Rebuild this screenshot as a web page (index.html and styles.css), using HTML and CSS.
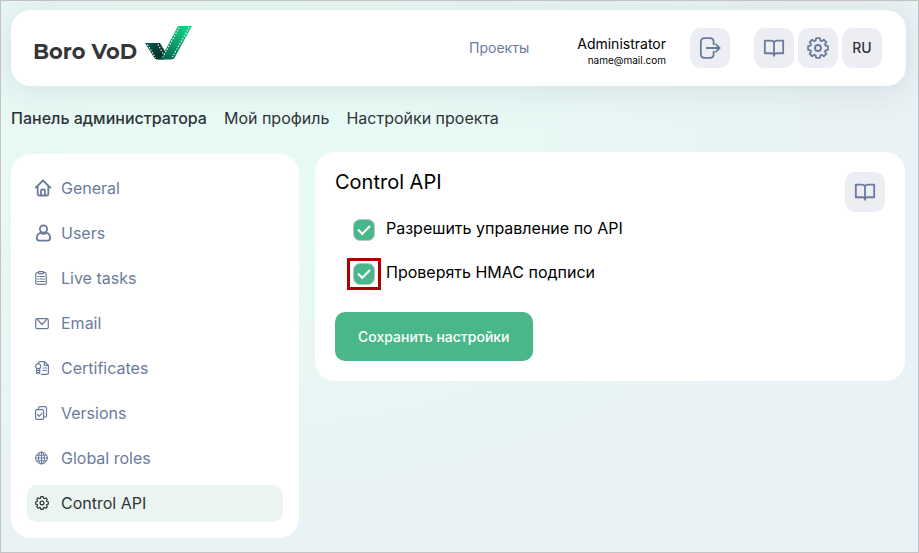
FILE: index.html
```html
<!DOCTYPE html>
<html lang="ru">
<head>
<meta charset="utf-8">
<meta name="viewport" content="width=device-width, initial-scale=1">
<title>Boro VoD</title>
<link rel="stylesheet" href="styles.css">
</head>
<body>
<svg class="sprite" aria-hidden="true">
  <symbol id="book" viewBox="0 0 24 24"><path d="M12 6C11.500 4.700 10 4 8.500 4H2v13.700h7c1.500 0 2.500.6 3 2 .5-1.400 1.500-2 3-2h7V4h-6.500C14 4 12.500 4.700 12 6zM12 6V20.500"/></symbol>
  <symbol id="gear" viewBox="0 0 24 24"><path d="M10 2.200h4l.6 2.700 1.400.6 2.400-1.500 2.700 2.700-1.500 2.400.6 1.400 2.600.5v4l-2.600.6-.6 1.300 1.500 2.400-2.700 2.700-2.400-1.500-1.400.6-.6 2.700h-4l-.6-2.700-1.400-.6L5.600 22l-2.700-2.700 1.500-2.400-.6-1.300-2.600-.6v-4l2.600-.5.6-1.400-1.500-2.400L5.600 4 8 5.500l1.400-.6z" transform="translate(0 -1)"/><circle cx="12" cy="12" r="3.300"/></symbol>
</svg>
<div class="page">
  <header class="topbar">
    <a class="brand" href="#">
      <span>Boro VoD</span>
      <svg class="brand-mark" viewBox="0 0 48 36" aria-hidden="true">
        <defs>
          <linearGradient id="long" x1="1" y1="0" x2=".3" y2="1"><stop offset="0" stop-color="#00e087"/><stop offset=".5" stop-color="#12a670"/><stop offset="1" stop-color="#056650"/></linearGradient>
          <linearGradient id="short" x1="0" y1="0" x2="1" y2="1"><stop offset="0" stop-color="#07594d"/><stop offset="1" stop-color="#02231f"/></linearGradient>
        </defs>
        <path fill="url(#short)" d="M0 18h15l6 10-2 6.500H12q-2 0-3-2z"/>
        <path fill="url(#long)" d="M33 1h14L30 32q-1 2.500-4 2.500H12q3.500-.5 5-3z"/>
        <g fill="none" stroke="#fff" stroke-linecap="butt" stroke-width="1.200" stroke-dasharray="1.300 1.700">
          <path d="M34.200 2.500 18 32M44 2.500 27.500 32M2.500 19.500 10.500 33M13 19.500 18 28.500"/>
        </g>
      </svg>
    </a>
    <nav class="topnav"><a href="#">Проекты</a></nav>
    <div class="user"><span class="user-name">Administrator</span><span class="user-mail">name@mail.com</span></div>
    <button class="tile" type="button" aria-label="Выйти"><svg class="icon" viewBox="0 0 24 24"><path d="M16 8V5.500Q16 1.200 11.800 1.200H6.200Q2 1.200 2 5.500v13q0 4.300 4.200 4.300h5.600Q16 22.800 16 18.500V16M8.500 12H22.500M18.500 8l4 4-4 4"/></svg></button>
    <div class="tools">
      <button class="tile" type="button" aria-label="Документация"><svg class="icon"><use href="#book"/></svg></button>
      <button class="tile" type="button" aria-label="Настройки"><svg class="icon"><use href="#gear"/></svg></button>
      <button class="tile" type="button">RU</button>
    </div>
  </header>

  <nav class="tabs">
    <a class="current" href="#">Панель администратора</a>
    <a href="#">Мой профиль</a>
    <a href="#">Настройки проекта</a>
  </nav>

  <div class="columns">
    <nav class="sidebar">
      <a href="#"><svg class="large" viewBox="0 0 18 18"><path d="M.9 8.500 8 1.500l7.100 7M2.700 7.500V15q0 1.500 1.500 1.500h7.600q1.500 0 1.500-1.500V7.500M6 16.500V12q0-1.500 1.500-1.500h1Q10 10.500 10 12v4.500"/></svg>General</a>
      <a href="#"><svg class="large" viewBox="0 0 18 18"><circle cx="8.500" cy="5" r="3.600"/><path d="M5.500 8.800C3 9.500 1.800 11.500 1.800 14q0 2.700 2.500 2.700h8.400q2.500 0 2.500-2.700c0-2.500-1.200-4.500-3.700-5.200-1.700 1.300-4.300 1.300-6 0z"/></svg>Users</a>
      <a href="#"><svg viewBox="0 0 14 14"><path d="M3.500 1.500H2Q.8 1.500.8 3v9q0 1.400 1.400 1.400h7.600q1.400 0 1.400-1.400V3q0-1.500-1.200-1.500H8.500M3.500.6h5v2h-5zM2.600 5.500h1M5 5.500h4.500M2.600 8h1M5 8h4.500M2.600 10.500h1M5 10.500h4.500"/></svg>Live tasks</a>
      <a href="#"><svg viewBox="0 0 14 14"><rect x=".7" y="2.700" width="12.600" height="10" rx="1.500"/><path d="m2.500 3.500 4.500 5 4.500-5"/></svg>Email</a>
      <a href="#"><svg viewBox="0 0 14 14"><path d="M3.500 2.200V1.800Q3.500.6 4.800.6h4.700l3.900 3.600V12q0 1.400-1.400 1.400H6.500M9.300.8v3.600h3.900M8 7h3.500M8 9.500h3.500"/><circle cx="3.200" cy="5.200" r="2.500"/><path d="M1.700 7.500v5l1.500-1 1.500 1v-5M2 9.500h2.500"/></svg>Certificates</a>
      <a href="#"><svg viewBox="0 0 14 14"><rect x=".6" y="3.600" width="8" height="9.800" rx="1.300"/><path d="M3.500 3.300V1.900Q3.500.6 4.800.6h5.400q1.300 0 1.300 1.300v7.800q0 1.300-1.300 1.300H9M2.500 8.500l1.700 1.800L7 7.200"/></svg>Versions</a>
      <a href="#"><svg class="fine" viewBox="0 0 14 14"><circle cx="6.500" cy="7" r="5.900"/><ellipse cx="6.500" cy="7" rx="3" ry="5.900"/><path d="M6.500 1.100v11.800M.6 7h11.800M1.500 4.200h10M1.500 9.800h10"/></svg>Global roles</a>
      <a class="active" href="#" aria-current="page"><svg class="gear-small"><use href="#gear"/></svg>Control API</a>
    </nav>

    <main class="panel">
      <div class="panel-head">
        <h1>Control API</h1>
        <button class="tile" type="button" aria-label="Справка"><svg class="icon"><use href="#book"/></svg></button>
      </div>
      <form>
        <label class="option"><span class="check"><input type="checkbox" checked></span>Разрешить управление по API</label>
        <label class="option"><span class="check marked"><input type="checkbox" checked></span>Проверять HMAC подписи</label>
        <button class="save" type="button">Сохранить настройки</button>
      </form>
    </main>
  </div>
</div>
</body>
</html>
```
FILE: styles.css
```css
:root {
  --slate: #6b7b9e;
  --green: #4ab78b;
  --ink: #2f3437;
}

* { box-sizing: border-box; }

body {
  margin: 0;
  min-height: 100vh;
  font: 16px/20px Inter, "Liberation Sans", sans-serif;
  color: #000;
  background: #fff;
}

.sprite { position: absolute; width: 0; height: 0; }

a { color: inherit; text-decoration: none; }

svg {
  fill: none;
  stroke: currentColor;
  stroke-linecap: round;
  stroke-linejoin: round;
}

.page {
  min-height: 100vh;
  padding: 9px 12px 14px 10px;
  border: 1px solid #c3c3c3;
  background:
    radial-gradient(ellipse 65% 70% at 28% 25%, #e8faf5 0%, #e8faf5 30%, #e9f2f4 100%);
}

.topbar {
  display: flex;
  align-items: center;
  height: 76px;
  padding: 0 24px 0 22px;
  border-radius: 20px;
  background: #fff;
  box-shadow: 0 4px 32px #94a5b340;
}

.brand {
  display: flex;
  align-items: center;
  gap: 8px;
  margin-right: auto;
  font: 700 21px/28px Montserrat, Lato, sans-serif;
  color: #363636;
}
.brand span { padding-top: 8px; }

.brand-mark { width: 48px; height: 36px; margin-bottom: 10px; stroke: none; }

.topnav { margin-right: 48px; font-size: 14px; color: var(--slate); }

.user {
  display: flex;
  flex-direction: column;
  align-items: flex-end;
  gap: 1px;
  margin-right: 24px;
  padding-top: 4px;
}
.user-name { font-size: 14px; line-height: 18px; }
.user-mail { font-size: 10px; line-height: 12px; }

.tile {
  display: grid;
  place-items: center;
  width: 40px;
  height: 40px;
  padding: 0;
  border: 0;
  border-radius: 10px;
  background: #edeef3;
  color: var(--slate);
}

.tools { display: flex; gap: 4px; margin-left: 24px; }
.tools .tile:last-child { font: 500 14px/20px Inter, sans-serif; color: var(--ink); }

.icon { width: 22px; height: 22px; stroke-width: 2; }

.tabs {
  display: flex;
  gap: 17px;
  padding: 22px 0 24px;
  color: var(--ink);
}
.tabs .current { font-weight: 500; }

.columns {
  display: grid;
  grid-template-columns: 288px 1fr;
  gap: 16px;
  align-items: start;
  padding-right: 1px;
}

.sidebar {
  display: flex;
  flex-direction: column;
  gap: 8px;
  margin-top: 2px;
  padding: 16px;
  border-radius: 20px;
  background: #fff;
  color: var(--slate);
}

.sidebar a {
  display: grid;
  grid-template-columns: 18px 1fr;
  align-items: center;
  gap: 8px;
  height: 37px;
  padding: 0 8px 2px;
  border-radius: 10px;
}
.sidebar svg { width: 14px; height: 14px; stroke-width: 1.2; }
.sidebar .large { width: 18px; height: 18px; stroke-width: 1.8; }
.sidebar .fine { stroke-width: 1; }
.sidebar .gear-small { stroke-width: 2; }
.sidebar .active { background: #ebf4f1; color: var(--ink); }

.panel { padding: 20px; border-radius: 20px; background: #fff; }
.panel-head { display: flex; justify-content: space-between; }

h1 { margin: 0; font-size: 20px; line-height: 20px; font-weight: 400; }

.option {
  display: flex;
  align-items: center;
  gap: 11px;
  width: max-content;
  height: 28px;
  margin: 0 0 16px 18px;
}
.option:first-child { margin-top: 2px; }

.check { position: relative; display: flex; margin-top: 4px; }

.marked::after {
  content: "";
  position: absolute;
  inset: -5px -6px;
  border: 3px solid #ae0000;
  pointer-events: none;
}

.check input {
  appearance: none;
  display: grid;
  place-items: center;
  width: 22px;
  height: 22px;
  margin: 0;
  border: 1px solid #b5c9cc;
  border-radius: 7px;
  background: var(--green);
}

.check input:checked::before {
  content: "";
  box-sizing: border-box;
  width: 12px;
  height: 7px;
  margin-bottom: 3px;
  border: solid #fff;
  border-width: 0 0 2px 2px;
  transform: rotate(-45deg);
}

.save {
  display: block;
  height: 49px;
  margin-top: 26px;
  padding: 0 23px;
  border: 0;
  border-radius: 10px;
  background: var(--green);
  color: #fff;
  font: 500 14px/20px Inter, "Liberation Sans", sans-serif;
}
```
